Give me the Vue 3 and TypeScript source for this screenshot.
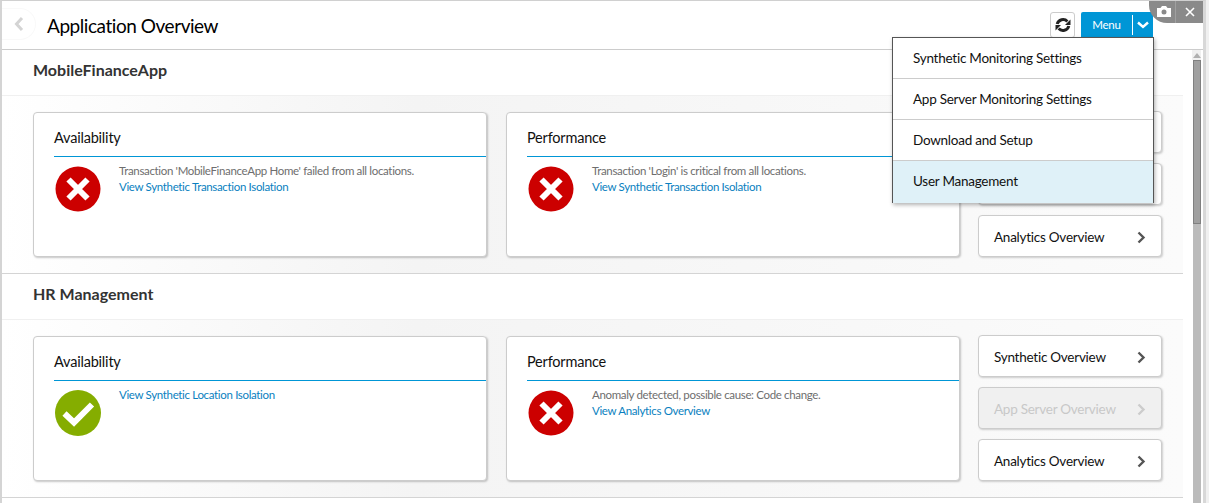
<script setup lang="ts">
interface Card { title: string; ok: boolean; text?: string; link: string }
interface Nav { label: string; disabled?: boolean }
interface Section { name: string; cards: Card[]; navs: Nav[] }

const sections: Section[] = [
  {
    name: 'MobileFinanceApp',
    cards: [
      { title: 'Availability', ok: false, text: "Transaction 'MobileFinanceApp Home' failed from all locations.", link: 'View Synthetic Transaction Isolation' },
      { title: 'Performance', ok: false, text: "Transaction 'Login' is critical from all locations.", link: 'View Synthetic Transaction Isolation' },
    ],
    navs: [{ label: 'Synthetic Overview' }, { label: 'App Server Overview' }, { label: 'Analytics Overview' }],
  },
  {
    name: 'HR Management',
    cards: [
      { title: 'Availability', ok: true, link: 'View Synthetic Location Isolation' },
      { title: 'Performance', ok: false, text: 'Anomaly detected, possible cause: Code change.', link: 'View Analytics Overview' },
    ],
    navs: [{ label: 'Synthetic Overview' }, { label: 'App Server Overview', disabled: true }, { label: 'Analytics Overview' }],
  },
]
const menu = ['Synthetic Monitoring Settings', 'App Server Monitoring Settings', 'Download and Setup', 'User Management']
</script>

<template>
  <div class="frame">
    <header class="top">
      <button class="back" aria-label="Back">
        <svg width="10" height="16" viewBox="0 0 10 16"><path d="M8 2 2.500 8 8 14" fill="none" stroke="#d4d4d4" stroke-width="3" /></svg>
      </button>
      <h1>Application Overview</h1>
      <div class="actions">
        <button class="refresh" aria-label="Refresh">
          <svg width="16" height="16" viewBox="0 0 16 16" fill="none" stroke="#222" stroke-width="3">
            <path d="M2.200 7A6 6 0 0 1 12.400 4.400" />
            <path d="M13.800 9A6 6 0 0 1 3.600 11.600" />
            <path d="M15.500 2.500V8H10z" fill="#222" stroke="none" />
            <path d="M.5 13.500V8H6z" fill="#222" stroke="none" />
          </svg>
        </button>
        <div class="menu-btn">
          <span class="menu-label">Menu</span>
          <span class="menu-caret">
            <svg width="12" height="8" viewBox="0 0 12 8"><path d="M1 1.500 6 6l5-4.500" fill="none" stroke="#fff" stroke-width="2.400" /></svg>
          </span>
        </div>
      </div>
    </header>

    <div class="body">
      <main class="content">
        <section v-for="s in sections" :key="s.name" class="section">
          <h2>{{ s.name }}</h2>
          <div class="band">
            <article v-for="c in s.cards" :key="c.title" class="card">
              <h3>{{ c.title }}</h3>
              <div class="card-body">
                <svg v-if="c.ok" class="status" viewBox="0 0 46 46">
                  <circle cx="23" cy="23" r="23" fill="#85ad00" />
                  <path d="M9.500 23.500 19 32.500 37 14.500" fill="none" stroke="#fff" stroke-width="6" />
                </svg>
                <svg v-else class="status" viewBox="0 0 46 46">
                  <circle cx="23" cy="23" r="22.500" fill="#cc0000" />
                  <path d="M13.500 13.500 32.500 32.500M32.500 13.500 13.500 32.500" fill="none" stroke="#fff" stroke-width="6" />
                </svg>
                <div class="msg">
                  <p v-if="c.text">{{ c.text }}</p>
                  <a>{{ c.link }}</a>
                </div>
              </div>
            </article>
            <nav class="navs">
              <a v-for="n in s.navs" :key="n.label" class="nav" :class="{ off: n.disabled }">
                <span>{{ n.label }}</span>
                <svg width="9" height="13" viewBox="0 0 9 13"><path d="M1.500 1.500 6.500 6.500 1.500 11.500" fill="none" stroke="currentColor" stroke-width="2.400" /></svg>
              </a>
            </nav>
          </div>
        </section>
      </main>
      <div class="scroll">
        <span class="arrow-box"><span class="arrow"></span></span>
        <span class="track"><span class="thumb"></span></span>
      </div>
    </div>

    <ul class="dropdown">
      <li v-for="(m, i) in menu" :key="m" :class="{ active: i === 3 }">{{ m }}</li>
    </ul>

    <div class="capture">
      <span class="cap-cam">
        <svg width="14" height="11" viewBox="0 0 14 11"><path fill-rule="evenodd" fill="#fff" d="M0 2h3.500L5 0h4l1.500 2H14v9H0zM7 3.500a2.500 2.500 0 1 0 0 5 2.500 2.500 0 0 0 0-5z" /></svg>
      </span>
      <span class="cap-x">
        <svg width="10" height="10" viewBox="0 0 10 10"><path d="M1 1 9 9M9 1 1 9" stroke="#fff" stroke-width="1.600" /></svg>
      </span>
    </div>
  </div>
</template>

<style>
html, body { margin: 0; padding: 0; background: #fff; }
</style>

<style scoped>
.frame {
  position: relative;
  box-sizing: border-box;
  width: 1206px;
  height: 503px;
  overflow: hidden;
  background: #fff;
  border-top: 1px solid #d0d0d0;
  border-left: 2px solid #d4d4d4;
  border-right: 3px solid #d8d8d8;
  box-shadow: 3px 0 0 #f0f0f0;
  font-family: Lato, "Noto Sans", sans-serif;
  color: #111;
}
.top {
  box-sizing: border-box;
  height: 49px;
  display: flex;
  align-items: center;
  border-bottom: 1px solid #ccc;
}
.back {
  box-sizing: border-box;
  width: 34px;
  height: 32px;
  margin-top: -2px;
  padding: 0 0 0 12px;
  display: flex;
  align-items: center;
  background: #fff;
  border: 1px solid #f9f9f9;
  border-left: 0;
  border-radius: 0 16px 16px 0;
}
h1 {
  margin: 0 0 0 11px;
  font-size: 19px;
  font-weight: 400;
  letter-spacing: -0.45px;
  color: #000;
}
.actions {
  margin-left: auto;
  margin-right: 50px;
  margin-top: -1px;
  display: flex;
  gap: 6px;
}
.refresh {
  box-sizing: border-box;
  width: 25px;
  height: 26px;
  padding: 0;
  display: flex;
  align-items: center;
  justify-content: center;
  background: #fff;
  border: 1px solid #ccc;
  border-radius: 3px;
}
.menu-btn {
  width: 72px;
  height: 26px;
  display: flex;
  align-items: center;
  background: #0096d6;
  color: #fff;
  font-size: 11.500px;
  letter-spacing: -0.2px;
  border-radius: 2px 2px 0 0;
}
.menu-label {
  width: 51px;
  text-align: center;
}
.menu-caret {
  flex: 1;
  height: 20px;
  display: flex;
  align-items: center;
  justify-content: center;
  border-left: 1px solid #fff;
}
.body {
  display: flex;
  height: 453px;
}
.content {
  flex: none;
  width: 1181px;
  overflow: hidden;
}
.section {
  border-bottom: 1px solid #d4d4d4;
}
h2 {
  box-sizing: border-box;
  height: 46px;
  margin: 0;
  padding: 10px 0 0 31px;
  font-size: 16px;
  font-weight: 700;
  color: #333;
  border-bottom: 1px solid #f0f0f0;
}
.band {
  height: 177px;
  box-sizing: border-box;
  padding: 16px 21px 0 31px;
  display: flex;
  gap: 19px;
  background: linear-gradient(90deg, #fff, #f4f4f4 35%, #fbfbfb);
}
.card {
  box-sizing: border-box;
  width: 454px;
  height: 145px;
  padding: 0 0 0 20px;
  background: #fff;
  border: 1px solid #ccc;
  border-radius: 4px;
  box-shadow: 1px 1px 2px rgba(0, 0, 0, 0.22);
}
h3 {
  box-sizing: border-box;
  height: 44px;
  margin: 0;
  padding-top: 16px;
  font-size: 14.500px;
  font-weight: 400;
  line-height: 18px;
  letter-spacing: -0.2px;
  color: #111;
  border-bottom: 1px solid #0096d6;
}
.card-body {
  display: flex;
  gap: 18px;
  padding: 9px 0 0 1px;
}
.status {
  flex: none;
  width: 46px;
  height: 46px;
}
.msg {
  margin-top: -3px;
  font-size: 11.500px;
  line-height: 16px;
  letter-spacing: -0.34px;
}
.msg p {
  margin: 0;
  color: #6e6e6e;
}
.msg a {
  color: #0a7fc0;
}
.navs {
  display: flex;
  flex-direction: column;
  gap: 10px;
  margin-left: -1px;
  margin-top: -1px;
}
.nav {
  box-sizing: border-box;
  width: 184px;
  height: 42px;
  padding: 2px 15px 0;
  display: flex;
  align-items: center;
  justify-content: space-between;
  font-size: 13.500px;
  letter-spacing: -0.25px;
  white-space: nowrap;
  color: #111;
  background: #fff;
  border: 1px solid #ccc;
  border-radius: 4px;
  box-shadow: 1px 1px 2px rgba(0, 0, 0, 0.18);
}
.nav svg {
  color: #555;
}
.nav.off {
  color: #c8c8c8;
  background: #f0f0f0;
}
.nav.off svg {
  color: #ccc;
}
.scroll {
  flex: none;
  width: 9px;
  margin-left: 9px;
  display: flex;
  flex-direction: column;
}
.arrow-box {
  flex: none;
  height: 10px;
  display: flex;
  align-items: center;
  justify-content: center;
  background: #f0f0f0;
}
.arrow {
  width: 0;
  height: 0;
  border: 4px solid transparent;
  border-top: 0;
  border-bottom: 5px solid #b0b0b0;
}
.track {
  flex: 1;
  margin-left: 1px;
  background: #bbb;
}
.thumb {
  display: block;
  box-sizing: border-box;
  height: 164px;
  background: #a0a0a0;
  border: 1px solid #808080;
}
.dropdown {
  position: absolute;
  left: 890px;
  top: 36px;
  box-sizing: border-box;
  width: 262px;
  height: 166px;
  margin: 0;
  padding: 0;
  list-style: none;
  background: #fff;
  border: 1px solid #555;
  box-shadow: 1px 2px 4px rgba(0, 0, 0, 0.3);
}
.dropdown li {
  box-sizing: border-box;
  height: 41px;
  padding: 0 0 0 20px;
  display: flex;
  align-items: center;
  font-size: 13.500px;
  letter-spacing: -0.25px;
  border-bottom: 1px solid #ccc;
}
.dropdown li:last-child {
  border-bottom: 0;
  height: 42px;
  padding-bottom: 3px;
}
.dropdown li.active {
  background: #dff1f8;
}
.capture {
  position: absolute;
  top: -1px;
  right: 0;
  width: 54px;
  height: 23px;
  display: flex;
  background: #8a8a8a;
  border-bottom-left-radius: 18px;
}
.cap-cam {
  width: 27px;
  display: flex;
  align-items: center;
  justify-content: center;
  padding-left: 4px;
  box-sizing: border-box;
  border-right: 1px solid #a0a0a0;
}
.cap-x {
  flex: 1;
  display: flex;
  align-items: center;
  justify-content: center;
}
</style>
